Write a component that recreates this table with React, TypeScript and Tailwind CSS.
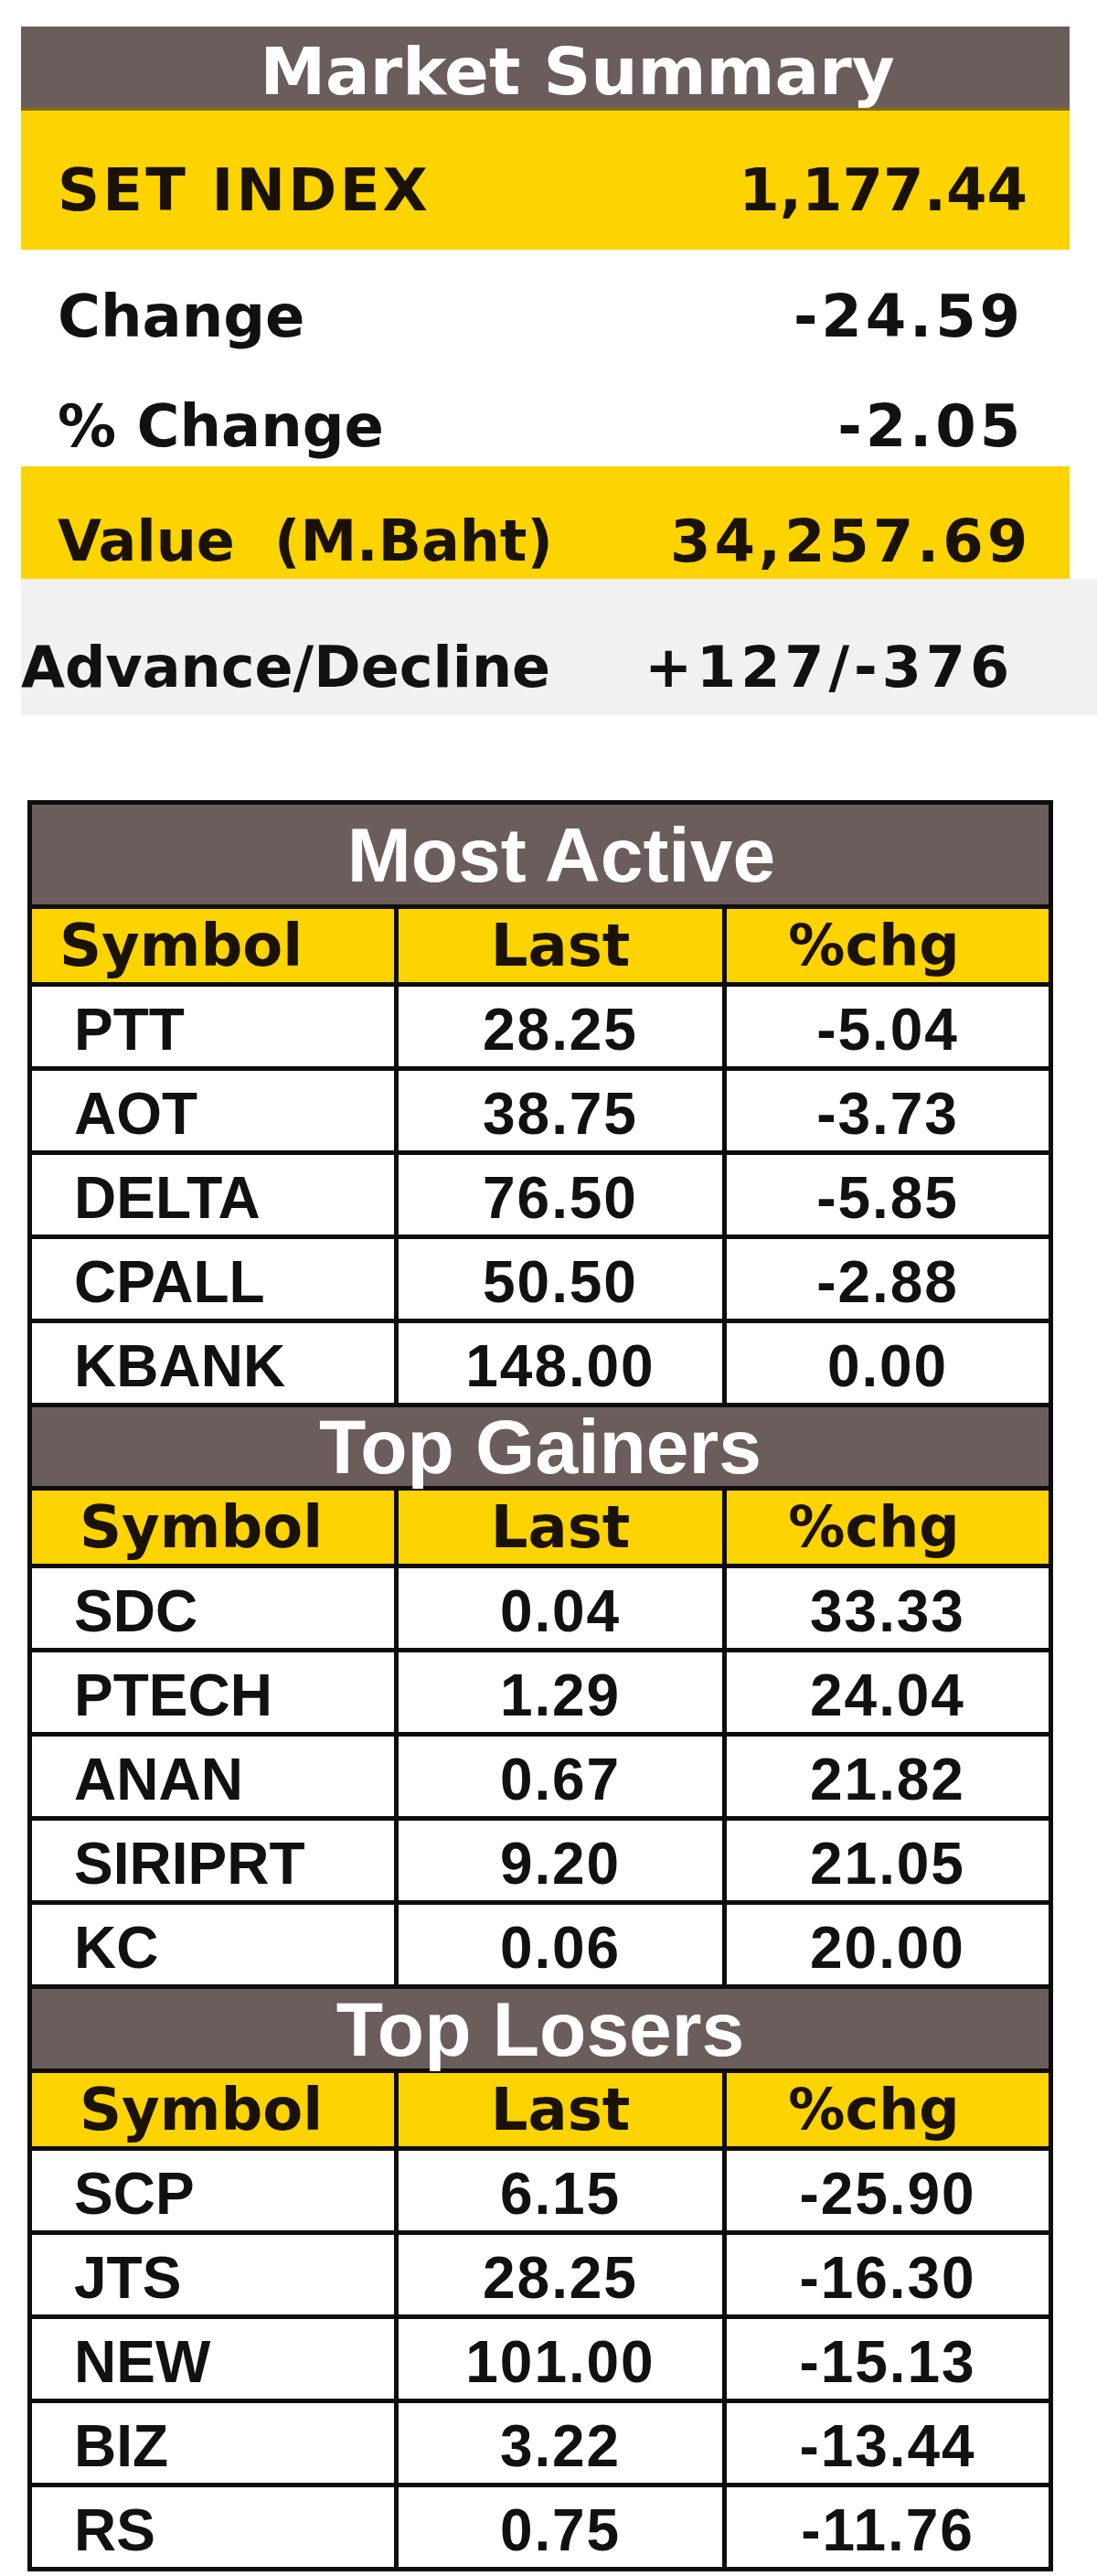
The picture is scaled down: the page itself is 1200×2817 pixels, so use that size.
type Row = { symbol: string; last: string; chg: string };

interface Section {
  title: string;
  headerH: string;
  headerPad: string;
  symbolPad: string;
  rows: Row[];
}

const sections: Section[] = [
  {
    title: "Most Active",
    headerH: "h-[109px]",
    headerPad: "pl-[46px]",
    symbolPad: "pl-[30px]",
    rows: [
      { symbol: "PTT", last: "28.25", chg: "-5.04" },
      { symbol: "AOT", last: "38.75", chg: "-3.73" },
      { symbol: "DELTA", last: "76.50", chg: "-5.85" },
      { symbol: "CPALL", last: "50.50", chg: "-2.88" },
      { symbol: "KBANK", last: "148.00", chg: "0.00" },
    ],
  },
  {
    title: "Top Gainers",
    headerH: "h-[86px]",
    headerPad: "pl-0",
    symbolPad: "pl-[52px]",
    rows: [
      { symbol: "SDC", last: "0.04", chg: "33.33" },
      { symbol: "PTECH", last: "1.29", chg: "24.04" },
      { symbol: "ANAN", last: "0.67", chg: "21.82" },
      { symbol: "SIRIPRT", last: "9.20", chg: "21.05" },
      { symbol: "KC", last: "0.06", chg: "20.00" },
    ],
  },
  {
    title: "Top Losers",
    headerH: "h-[87px]",
    headerPad: "pl-0",
    symbolPad: "pl-[52px]",
    rows: [
      { symbol: "SCP", last: "6.15", chg: "-25.90" },
      { symbol: "JTS", last: "28.25", chg: "-16.30" },
      { symbol: "NEW", last: "101.00", chg: "-15.13" },
      { symbol: "BIZ", last: "3.22", chg: "-13.44" },
      { symbol: "RS", last: "0.75", chg: "-11.76" },
    ],
  },
];

function MarketSummary() {
  return (
    <div className="pl-[23px] pt-[29px] font-['DejaVu_Sans',sans-serif] font-bold text-[#111]">
      <div className="w-[1147px]">
        <div className="h-[89px] bg-[#6b5d5b] flex items-center justify-center pl-[70px] pt-[8px] text-white text-[72px] leading-none">
          Market Summary
        </div>

        <div className="h-[155px] bg-[#fdd300] border-t-[3px] border-[#8a6d00] flex items-center justify-between pl-[40px] pr-[46px] pt-[21px] text-[64px] leading-none text-[#1a1205]">
          <span className="tracking-[0.05em]">SET INDEX</span>
          <span>1,177.44</span>
        </div>

        <div className="h-[133px] flex items-center justify-between pl-[40px] pr-[50px] pt-[13px] text-[64px] leading-none">
          <span>Change</span>
          <span className="tracking-[0.06em]">-24.59</span>
        </div>

        <div className="h-[104px] flex items-center justify-between pl-[40px] pr-[50px] pt-[16px] text-[64px] leading-none">
          <span>% Change</span>
          <span className="tracking-[0.06em]">-2.05</span>
        </div>

        <div className="h-[123px] bg-[#fdd300] flex items-center justify-between pl-[40px] pr-[42px] pt-[41px] text-[62px] leading-none text-[#1a1205]">
          <span className="whitespace-pre">Value  (M.Baht)</span>
          <span className="text-[64px] tracking-[0.06em]">34,257.69</span>
        </div>
      </div>

      <div className="w-[1177px] h-[149px] bg-[#f1f1f1] flex items-center justify-between pr-[91px] pt-[45px] text-[62px] leading-none">
        <span>Advance/Decline</span>
        <span className="tracking-[0.08em]">+127/-376</span>
      </div>
    </div>
  );
}

function StockTable() {
  return (
    <div className="ml-[30px] mt-[93px] w-[1122px] grid grid-cols-[396px_354px_352px] gap-[5px] bg-[#0d0d0d] p-[5px]">
      {sections.map((section) => (
        <div key={section.title} className="contents">
          <div
            className={`col-span-3 ${section.headerH} ${section.headerPad} bg-[#6b5d5b] flex items-center justify-center text-white font-['Liberation_Sans',sans-serif] font-bold text-[84px] leading-none`}
          >
            {section.title}
          </div>

          <div
            className={`h-[80px] bg-[#fdd300] flex items-center ${section.symbolPad} font-['DejaVu_Sans',sans-serif] font-bold text-[64px] leading-none text-[#1a1205]`}
          >
            Symbol
          </div>
          <div className="h-[80px] bg-[#fdd300] flex items-center justify-center font-['DejaVu_Sans',sans-serif] font-bold text-[64px] leading-none text-[#1a1205]">
            Last
          </div>
          <div className="h-[80px] bg-[#fdd300] flex items-center justify-center pr-[30px] font-['DejaVu_Sans',sans-serif] font-bold text-[62px] leading-none text-[#1a1205]">
            %chg
          </div>

          {section.rows.map((row) => (
            <div key={row.symbol} className="contents">
              <div className="h-[87px] bg-white flex items-center pl-[46px] pt-[6px] font-['Liberation_Sans',sans-serif] font-bold text-[64px] leading-none text-[#111]">
                {row.symbol}
              </div>
              <div className="h-[87px] bg-white flex items-center justify-center pt-[6px] font-['Liberation_Sans',sans-serif] font-bold text-[64px] leading-none tracking-[0.03em] text-[#111]">
                {row.last}
              </div>
              <div className="h-[87px] bg-white flex items-center justify-center pt-[6px] font-['Liberation_Sans',sans-serif] font-bold text-[64px] leading-none tracking-[0.03em] text-[#111]">
                {row.chg}
              </div>
            </div>
          ))}
        </div>
      ))}
    </div>
  );
}

export default function App() {
  return (
    <div className="w-[1200px] h-[2817px] bg-white overflow-hidden">
      <MarketSummary />
      <StockTable />
    </div>
  );
}
